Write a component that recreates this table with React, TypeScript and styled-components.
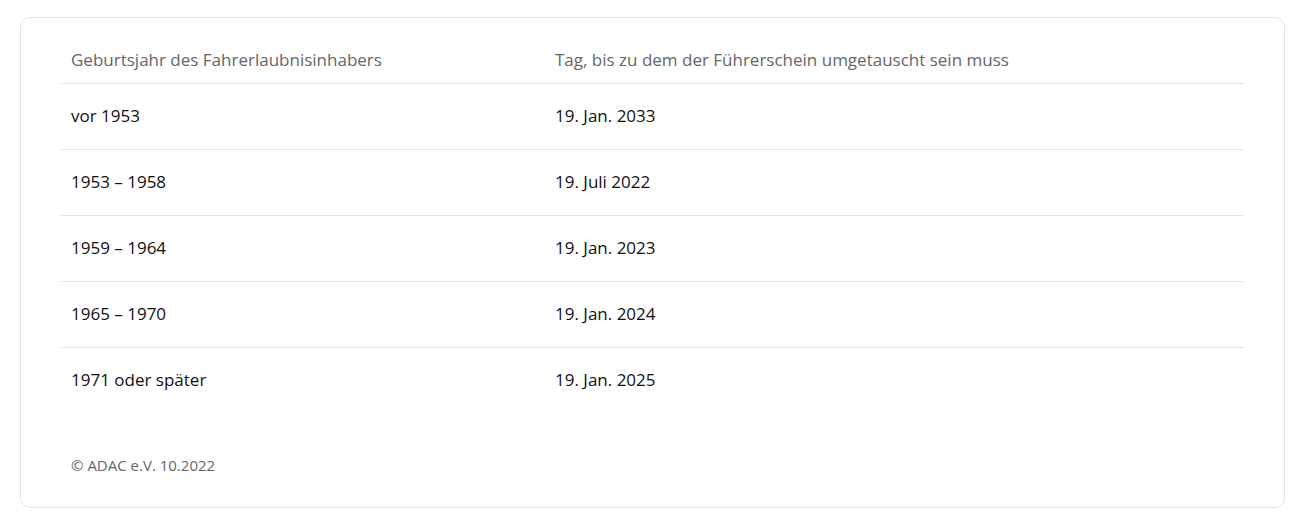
import React from 'react';
import styled, { createGlobalStyle } from 'styled-components';

const GlobalStyle = createGlobalStyle`
  body {
    margin: 0;
    background: #ffffff;
    font-family: 'Open Sans', 'Noto Sans', sans-serif;
  }
`;

const Page = styled.div`
  padding: 17px 11px 23px 20px;
`;

const Card = styled.div`
  border: 1px solid #e3e3e3;
  border-radius: 10px;
  background: #ffffff;
  padding: 24px 40px 31px;
`;

const Table = styled.table`
  width: 100%;
  border-collapse: collapse;
  table-layout: fixed;
`;

const Column = styled.col<{ $width?: number }>`
  width: ${(p) => (p.$width ? `${p.$width}px` : 'auto')};
`;

const HeadCell = styled.th`
  text-align: left;
  font-weight: 400;
  font-size: 17px;
  line-height: 24px;
  color: #666666;
  padding: 6px 10px 11px;
  border-bottom: 1px solid #e3e3e3;
`;

const Row = styled.tr`
  border-bottom: 1px solid #e3e3e3;

  &:last-child {
    border-bottom: none;
  }
`;

const Cell = styled.td`
  font-size: 17px;
  line-height: 24px;
  color: #111111;
  padding: 20px 10px 21px;
`;

const Source = styled.p`
  margin: 42px 0 0 10px;
  font-size: 15px;
  line-height: 21px;
  color: #666666;
`;

interface Deadline {
  born: string;
  until: string;
}

const deadlines: Deadline[] = [
  { born: 'vor 1953', until: '19. Jan. 2033' },
  { born: '1953 – 1958', until: '19. Juli 2022' },
  { born: '1959 – 1964', until: '19. Jan. 2023' },
  { born: '1965 – 1970', until: '19. Jan. 2024' },
  { born: '1971 oder später', until: '19. Jan. 2025' },
];

const App: React.FC = () => {
  return (
    <Page>
      <GlobalStyle />
      <Card>
        <Table>
          <colgroup>
            <Column $width={484} />
            <Column />
          </colgroup>
          <thead>
            <tr>
              <HeadCell>Geburtsjahr des Fahrerlaubnisinhabers</HeadCell>
              <HeadCell>Tag, bis zu dem der Führerschein umgetauscht sein muss</HeadCell>
            </tr>
          </thead>
          <tbody>
            {deadlines.map((d) => (
              <Row key={d.born}>
                <Cell>{d.born}</Cell>
                <Cell>{d.until}</Cell>
              </Row>
            ))}
          </tbody>
        </Table>
        <Source>© ADAC e.V. 10.2022</Source>
      </Card>
    </Page>
  );
};

export default App;
